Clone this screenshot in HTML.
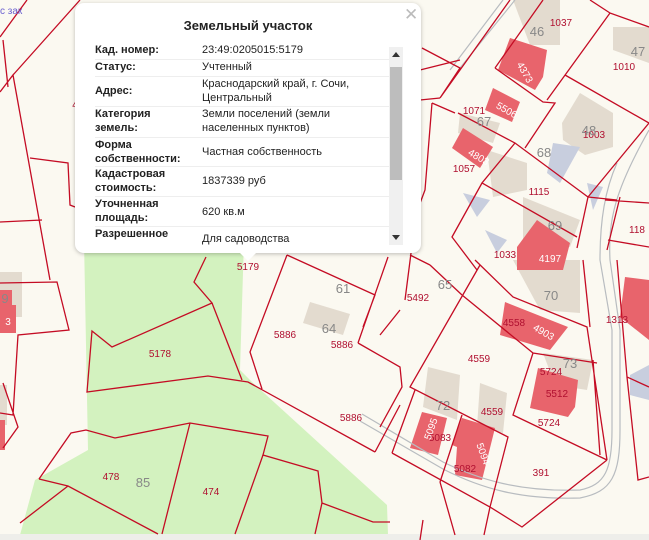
<!DOCTYPE html>
<html><head><meta charset="utf-8"><style>
body{margin:0;width:649px;height:540px;overflow:hidden;background:#fbf9f1;font-family:"Liberation Sans",sans-serif;position:relative}
svg{position:absolute;left:0;top:0}
.pop{position:absolute;left:75px;top:3px;width:346px;height:250px;background:#fff;border-radius:9px;box-shadow:0 1px 4px rgba(0,0,0,.25)}
.tail{position:absolute;left:239px;top:252px;width:0;height:0;border-left:9px solid transparent;border-right:9px solid transparent;border-top:9px solid #fff}
.title{position:absolute;left:0;width:346px;top:15px;text-align:center;font-weight:bold;font-size:13px;color:#222}
.close{position:absolute;left:329px;top:2px;font-size:17px;color:#bbb}
.r{position:absolute;left:20px;width:294px;font-size:11px;color:#222;border-bottom:1px solid #eee;line-height:14px}
.r b{position:absolute;left:0;top:0}
.r span{position:absolute;left:107px}
.sb{position:absolute;left:314px;top:44px;width:14px;height:198px;background:#f0f0f0}
.th{position:absolute;left:1px;top:20px;width:12px;height:113px;background:#bdbdbd}
.map text{font-family:"Liberation Sans",sans-serif}
</style></head><body>
<svg class="map" width="649" height="540" viewBox="0 0 649 540">
<polygon points="84,240 244,240 240,370 253,383 387,505 388,535 20,535 35,480 88,450" fill="#d3f2bf"/>
<rect x="0" y="534" width="649" height="6" fill="#eeeeea"/>
<g fill="#e3dbcf">
<rect x="0" y="272" width="22" height="45"/><rect x="0" y="385" width="7" height="40"/>
<polygon points="310,302 350,314 343,335 303,323"/>
<polygon points="513,0 560,0 560,45 530,45"/><polygon points="613,27 649,27 649,63 613,50"/>
<polygon points="580,93 613,113 613,147 585,155 563,140 562,123"/><polygon points="460,113 500,123 493,143 458,133"/>
<polygon points="487,150 527,163 527,190 493,197"/><polygon points="523,197 580,220 570,247 523,240"/>
<polygon points="513,260 580,260 580,313 540,310"/><polygon points="543,353 593,360 587,390 555,385"/>
<polygon points="428,367 460,375 457,420 423,407"/><polygon points="480,383 507,393 503,433 477,427"/>
</g>
<g fill="#c8cede"><polygon points="553,143 580,147 560,183 547,173"/><polygon points="587,183 603,187 593,210"/><polygon points="463,193 490,200 477,217"/><polygon points="485,230 507,240 497,253"/><polygon points="630,375 649,365 649,400 630,395"/></g>
<g fill="#e8646c">
<polygon points="0,290 12,290 12,305 16,305 16,333 0,333"/><polygon points="0,420 5,420 5,450 0,450"/>
<polygon points="510,38 547,50 543,77 535,90 498,70"/>
<polygon points="493,88 520,102 512,122 485,110"/><polygon points="463,128 493,147 480,168 452,148"/>
<polygon points="537,220 570,243 563,270 517,270 517,247"/>
<polygon points="505,302 568,327 550,350 500,335"/><polygon points="538,368 578,380 575,407 568,417 530,408"/>
<polygon points="625,277 649,280 649,340 620,317"/>
<polygon points="422,412 447,418 438,455 410,448"/><polygon points="462,418 495,428 482,480 455,475 457,447 452,445"/>
</g>
<g fill="none" stroke="#b8bcc0" stroke-width="1.2">
<path d="M362,414 L443,462 C480,480 520,492 580,490 C605,485 612,470 612,430 L612,330 L600,260 C600,220 605,190 617,163"/>
<path d="M360,421 L443,469 C480,488 520,500 580,498 C612,492 620,475 620,430 L620,330 L610,260 C608,220 615,190 649,130"/>
<path d="M503,0 L450,70 M515,0 L460,68"/>
</g>
<g fill="none" stroke="#c40c24" stroke-width="1.3">
<path d="M0,37 L27,0 M13,75 L80,0 M0,92 L13,75 L50,280 M3,40 L8,87 M30,158 L68,163 L70,205 L75,207 M0,222 L42,220 M0,283 L57,282 L69,330 L18,335 L13,415 L0,413 M3,383 L18,427 L3,448"/>
<path d="M206,257 L194,282 L212,303 L112,347 L92,331 L87,392 L208,376 L248,382 L375,452 M212,303 L242,380"/>
<path d="M39,479 L71,433 L86,430 L115,438 L190,423 L268,436 L263,455 L318,471 L322,503 L373,522 L390,522"/>
<path d="M39,479 L68,486 L158,534 M68,486 L20,523 M190,423 L162,534 M263,455 L235,534 M322,503 L315,534"/>
<path d="M287,255 L375,295 L363,327 M287,255 L250,352 L262,389 M375,452 L400,405 M358,343 L400,367 L402,387 L380,427 M388,257 L358,343 M415,222 L405,300"/>
<path d="M422,48 L460,68 L440,98 L510,0 M495,68 L543,0 M495,68 L543,102 L555,103 L525,148 M547,100 L610,13 L649,27 M590,0 L610,13 M565,75 L649,123"/>
<path d="M420,70 L460,60 M420,100 L440,98 M458,113 L515,143 L588,197 L617,200 M588,197 L577,248 M515,143 L482,183 L577,237 M482,183 L452,237 L477,270 M432,103 L425,190 L410,230 M455,113 L432,103 M649,123 L588,197 M605,200 L649,203 M608,240 L649,247 M620,197 L607,250"/>
<path d="M475,260 L513,297 L587,327 L607,460 M583,260 L590,327 M462,295 L533,353 L597,363 M480,265 L410,387 L508,437 L490,507 M533,353 L513,415 L607,460 M392,453 L490,507 L522,527 L607,460 M415,390 L392,453 M462,415 L440,482 M593,360 L600,455"/>
<path d="M617,260 L627,377 L649,387 M627,377 L638,480 L649,477 M423,520 L420,540 M490,507 L484,535 M440,482 L455,535 M430,265 L462,295 M410,255 L430,265 M400,310 L380,335"/>
</g>
<g font-size="10" fill="#b01030" text-anchor="middle">
<text x="248" y="270">5179</text><text x="160" y="357">5178</text><text x="285" y="338">5886</text><text x="342" y="348">5886</text><text x="351" y="421">5886</text>
<text x="111" y="480">478</text><text x="211" y="495">474</text><text x="418" y="301">5492</text><text x="479" y="362">4559</text><text x="492" y="415">4559</text>
<text x="541" y="476">391</text><text x="561" y="26">1037</text><text x="624" y="70">1010</text><text x="594" y="138">1003</text><text x="474" y="114">1071</text>
<text x="464" y="172">1057</text><text x="539" y="195">1115</text><text x="505" y="258">1033</text><text x="637" y="233">118</text><text x="617" y="323">1313</text>
<text x="514" y="326">4558</text><text x="551" y="375">5724</text><text x="557" y="397">5512</text><text x="549" y="426">5724</text><text x="440" y="441">5083</text><text x="465" y="472">5082</text>
<text x="75" y="108">4</text>
</g>
<g font-size="10" fill="#fff" text-anchor="middle"><text x="522" y="74" transform="rotate(60 522 74)">4373</text><text x="505" y="113" transform="rotate(30 505 113)">5506</text><text x="477" y="160" transform="rotate(30 477 160)">4803</text><text x="550" y="262">4197</text><text x="542" y="335" transform="rotate(30 542 335)">4903</text><text x="434" y="430" transform="rotate(-70 434 430)">5095</text><text x="480" y="455" transform="rotate(70 480 455)">5094</text><text x="8" y="325">3</text></g>
<g font-size="13" fill="#888" text-anchor="middle">
<text x="537" y="36">46</text><text x="638" y="56">47</text><text x="484" y="126">67</text><text x="544" y="157">68</text><text x="555" y="230">69</text><text x="551" y="300">70</text>
<text x="343" y="293">61</text><text x="329" y="333">64</text><text x="445" y="289">65</text><text x="143" y="487">85</text><text x="443" y="410">72</text><text x="570" y="368">73</text><text x="5" y="303">9</text><text x="589" y="135">48</text>
</g>
<text x="0" y="14" font-size="10" fill="#6a60d0">с зак</text>
</svg>
<div class="pop">
<div class="title">Земельный участок</div><div class="close">✕</div>
<div class="r" style="top:40px;height:16px"><b>Кад. номер:</b><span>23:49:0205015:5179</span></div>
<div class="r" style="top:57px;height:16px"><b>Статус:</b><span>Учтенный</span></div>
<div class="r" style="top:74px;height:29px"><b style="top:7px">Адрес:</b><span>Краснодарский край, г. Сочи, Центральный</span></div>
<div class="r" style="top:104px;height:30px"><b>Категория<br>земель:</b><span>Земли поселений (земли<br>населенных пунктов)</span></div>
<div class="r" style="top:135px;height:28px"><b>Форма<br>собственности:</b><span style="top:7px">Частная собственность</span></div>
<div class="r" style="top:164px;height:29px"><b>Кадастровая<br>стоимость:</b><span style="top:7px">1837339 руб</span></div>
<div class="r" style="top:194px;height:29px"><b>Уточненная<br>площадь:</b><span style="top:8px">620 кв.м</span></div>
<div class="r" style="top:224px;height:18px;overflow:hidden;border:0"><b>Разрешенное<br>использование:</b><span style="top:5px">Для садоводства</span></div>
<div class="sb"><div class="th"></div><div style="position:absolute;left:3px;top:5px;border-left:4px solid transparent;border-right:4px solid transparent;border-bottom:5px solid #333"></div><div style="position:absolute;left:3px;top:188px;border-left:4px solid transparent;border-right:4px solid transparent;border-top:5px solid #333"></div></div>
</div>
<div class="tail"></div>
</body></html>
